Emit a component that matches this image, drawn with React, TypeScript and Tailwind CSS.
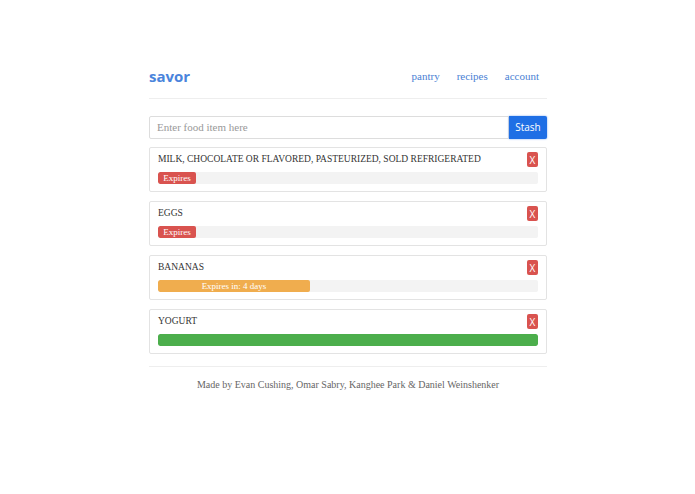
import React from "react";

const serif = { fontFamily: '"Liberation Serif", Georgia, serif' };

type Item = { name: string; color: string; pct: number; label: string };

const items: Item[] = [
  { name: "MILK, CHOCOLATE OR FLAVORED, PASTEURIZED, SOLD REFRIGERATED", color: "bg-[#d9534f]", pct: 10, label: "Expires" },
  { name: "EGGS", color: "bg-[#d9534f]", pct: 10, label: "Expires" },
  { name: "BANANAS", color: "bg-[#f0ad4e]", pct: 40, label: "Expires in: 4 days" },
  { name: "YOGURT", color: "bg-[#4cae4c]", pct: 100, label: "" },
];

export default function App() {
  return (
    <div className="w-[695px] h-[494px] bg-white" style={serif}>
      <div className="w-[398px] ml-[149px] pt-[66px]">
        <div className="flex items-center justify-between h-[20px]">
          <div className="text-[15px] font-bold text-[#4a84dc] leading-none" style={{ fontFamily: '"Open Sans", Inter, sans-serif' }}>savor</div>
          <div className="flex gap-[17px] text-[11px] text-[#4a7fd4] pr-[8px]">
            <span>pantry</span>
            <span>recipes</span>
            <span>account</span>
          </div>
        </div>
        <div className="mt-[12px] border-t border-[#eeeeee]" />
        <div className="mt-[17px] flex h-[23px]">
          <div className="flex-1 border border-[#dddddd] rounded-l-[2px] flex items-center px-[7px] text-[11px] text-[#999999]">Enter food item here</div>
          <div className="w-[38px] bg-[#1f6fe5] text-white text-[10px] flex items-center justify-center rounded-r-[2px] shadow-[0_0_2px_#6fa0f0]" style={{ fontFamily: '"Open Sans", sans-serif' }}>Stash</div>
        </div>
        <div className="mt-[8px] flex flex-col gap-[9px]">
          {items.map((it) => (
            <div key={it.name} className="h-[45px] border border-[#e3e3e3] rounded-[2px] px-[8px] pt-[4px]">
              <div className="flex justify-between items-start h-[15px]">
                <div className="text-[9.5px] leading-[13px] text-[#333333] mt-[1px] whitespace-nowrap">{it.name}</div>
                <div className="w-[11px] h-[15px] bg-[#d9534f] rounded-[2px] text-white text-[10px] flex items-center justify-center leading-none" style={{ fontFamily: '"Open Sans", sans-serif' }}>X</div>
              </div>
              <div className="mt-[5px] h-[12px] bg-[#f3f3f3] rounded-[2px] overflow-hidden">
                <div className={`${it.color} h-full text-white text-[9px] flex items-center justify-center rounded-[2px] leading-none`} style={{ width: `${it.pct}%` }}>{it.label}</div>
              </div>
            </div>
          ))}
        </div>
        <div className="mt-[12px] border-t border-[#eeeeee]" />
        <div className="mt-[10px] text-center text-[10px] text-[#666666]">Made by Evan Cushing, Omar Sabry, Kanghee Park &amp; Daniel Weinshenker</div>
      </div>
    </div>
  );
}
